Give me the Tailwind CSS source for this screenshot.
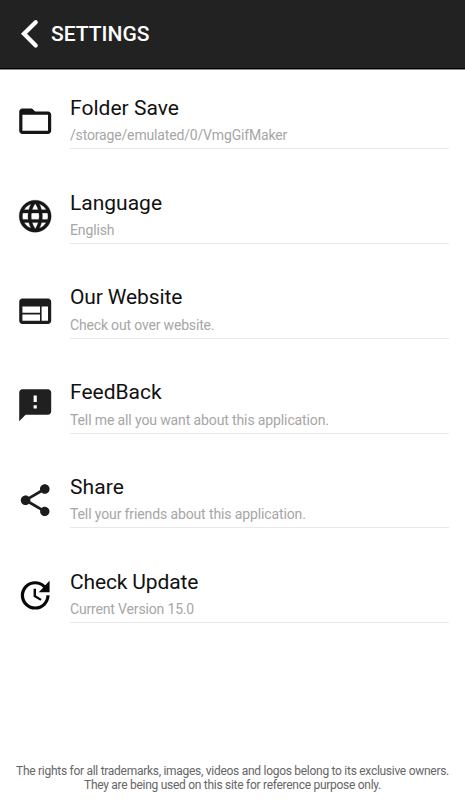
<!DOCTYPE html>
<html lang="en">
<head>
<meta charset="utf-8">
<title>Settings</title>
<script src="https://cdn.jsdelivr.net/npm/@tailwindcss/browser@4"></script>
</head>
<body class="bg-white font-['Roboto',sans-serif]">
<div class="flex h-[800px] w-[465px] flex-col overflow-hidden bg-white">
  <header class="flex h-[70px] shrink-0 items-center border-b border-[#8a8a8a] bg-[#222222] pb-[2px] pl-5 shadow-[inset_0_-1px_0_#000]">
    <svg class="h-8 w-[20px] shrink-0" viewBox="0 0 20 32" fill="none" stroke="#fff" stroke-width="4.3" stroke-linecap="round" stroke-linejoin="miter"><path d="M15.7 4.2 4 15.7 15.7 27.4"/></svg>
    <h1 class="pl-[11px] text-[21px] font-medium leading-7 text-white">SETTINGS</h1>
  </header>
  <main class="flex flex-col pt-[24px]">
    <section class="flex h-[94.85px] pl-[15.8px] pr-4">
      <svg class="mt-[8px] size-[38.4px] shrink-0 text-[#161616]" viewBox="0 0 24 24" fill="currentColor"><path d="M20 6h-8l-2-2H4c-1.1 0-1.99.9-1.99 2L2 18c0 1.1.9 2 2 2h16c1.1 0 2-.9 2-2V8c0-1.1-.9-2-2-2zm0 12H4V8h16v10z"/></svg>
      <div class="ml-[15.8px] h-[55px] flex-1 border-b border-[#e9e9e9]"><h2 class="text-[21px] leading-7 tracking-[0.03px] text-[#111]">Folder Save</h2><p class="text-[14px] leading-[26px] tracking-[-0.16px] text-[#a6a6a6]">/storage/emulated/0/VmgGifMaker</p></div>
    </section>
    <section class="flex h-[94.85px] pl-[15.8px] pr-4">
      <svg class="mt-[8px] size-[38.4px] shrink-0 text-[#161616]" viewBox="0 0 24 24" fill="currentColor"><path d="M11.99 2C6.47 2 2 6.48 2 12s4.47 10 9.99 10C17.52 22 22 17.52 22 12S17.52 2 11.99 2zm6.93 6h-2.95c-.32-1.25-.78-2.45-1.38-3.56 1.84.63 3.37 1.91 4.33 3.56zM12 4.04c.83 1.2 1.48 2.53 1.91 3.96h-3.82c.43-1.43 1.08-2.76 1.91-3.96zM4.26 14C4.1 13.36 4 12.69 4 12s.1-1.36.26-2h3.38c-.08.66-.14 1.32-.14 2s.06 1.34.14 2H4.26zm.82 2h2.95c.32 1.25.78 2.45 1.38 3.56-1.84-.63-3.37-1.9-4.33-3.56zm2.95-8H5.08c.96-1.66 2.49-2.93 4.33-3.56C8.81 5.55 8.35 6.75 8.03 8zM12 19.96c-.83-1.2-1.48-2.53-1.91-3.96h3.82c-.43 1.43-1.08 2.76-1.91 3.96zM14.34 14H9.66c-.09-.66-.16-1.32-.16-2s.07-1.35.16-2h4.68c.09.65.16 1.32.16 2s-.07 1.34-.16 2zm.25 5.56c.6-1.11 1.06-2.31 1.38-3.56h2.95c-.96 1.65-2.49 2.93-4.33 3.56zM16.36 14c.08-.66.14-1.32.14-2s-.06-1.34-.14-2h3.38c.16.64.26 1.31.26 2s-.1 1.36-.26 2h-3.38z" stroke="currentColor" stroke-width=".2"/></svg>
      <div class="ml-[15.8px] h-[55px] flex-1 border-b border-[#e9e9e9]"><h2 class="text-[21px] leading-7 text-[#111]">Language</h2><p class="text-[14px] leading-[26px] tracking-[-0.12px] text-[#a6a6a6]">English</p></div>
    </section>
    <section class="flex h-[94.85px] pl-[15.8px] pr-4">
      <svg class="mt-[8px] size-[38.4px] shrink-0 text-[#1c1c1c]" viewBox="0 0 24 24" fill="currentColor"><path d="M20 4H4c-1.1 0-1.99.9-1.99 2L2 18c0 1.1.9 2 2 2h16c1.1 0 2-.9 2-2V6c0-1.1-.9-2-2-2zm-5 14H4v-4h11v4zm0-5H4V9h11v4zm5 5h-4V9h4v9z"/></svg>
      <div class="ml-[15.8px] h-[55px] flex-1 border-b border-[#e9e9e9]"><h2 class="-mt-[0.6px] mb-[0.6px] text-[21px] leading-7 tracking-[-0.12px] text-[#111]">Our Website</h2><p class="text-[14px] leading-[26px] tracking-[-0.17px] text-[#a6a6a6]">Check out over website.</p></div>
    </section>
    <section class="flex h-[94.85px] pl-[15.8px] pr-4">
      <svg class="mt-[7.4px] size-[38.4px] shrink-0 text-[#202020]" viewBox="0 0 24 24" fill="currentColor"><path d="M20 2H4c-1.1 0-1.99.9-1.99 2L2 22l4-4h14c1.1 0 2-.9 2-2V4c0-1.1-.9-2-2-2zm-7 12h-2v-2h2v2zm0-4h-2V6h2v4z"/></svg>
      <div class="ml-[15.8px] h-[55px] flex-1 border-b border-[#e9e9e9]"><h2 class="-mt-[0.6px] mb-[0.6px] text-[21px] leading-7 text-[#111]">FeedBack</h2><p class="text-[14px] leading-[26px] tracking-[-0.12px] text-[#a6a6a6]">Tell me all you want about this application.</p></div>
    </section>
    <section class="flex h-[94.85px] pl-[15.8px] pr-4">
      <svg class="mt-[8px] size-[38.4px] shrink-0 text-[#1c1c1c]" viewBox="0 0 24 24" fill="currentColor"><path d="M18 16.08c-.76 0-1.44.3-1.96.77L8.91 12.7c.05-.23.09-.46.09-.7s-.04-.47-.09-.7l7.05-4.11c.54.5 1.25.81 2.04.81 1.66 0 3-1.34 3-3s-1.34-3-3-3-3 1.34-3 3c0 .24.04.47.09.7L8.04 9.81C7.5 9.31 6.79 9 6 9c-1.66 0-3 1.34-3 3s1.34 3 3 3c.79 0 1.5-.31 2.04-.81l7.12 4.16c-.05.21-.08.43-.08.65 0 1.61 1.31 2.92 2.92 2.92s2.92-1.31 2.92-2.92-1.31-2.92-2.92-2.92z"/></svg>
      <div class="ml-[15.8px] h-[55px] flex-1 border-b border-[#e9e9e9]"><h2 class="text-[21px] leading-7 tracking-[0.1px] text-[#111]">Share</h2><p class="text-[14px] leading-[26px] tracking-[-0.12px] text-[#a6a6a6]">Tell your friends about this application.</p></div>
    </section>
    <section class="flex h-[94.85px] pl-[15.8px] pr-4">
      <svg class="mt-[8px] size-[38.4px] shrink-0 text-[#080808]" viewBox="0 0 24 24" fill="currentColor"><path d="M21 10.12h-6.78l2.74-2.82c-2.73-2.7-7.15-2.8-9.88-.1-2.73 2.71-2.73 7.08 0 9.79s7.15 2.71 9.88 0C18.32 15.65 19 14.08 19 12.1h2c0 1.98-.88 4.55-2.64 6.29-3.51 3.48-9.21 3.48-12.72 0-3.5-3.47-3.53-9.11-.02-12.58s9.14-3.47 12.65 0L21 3v7.12zM12.5 8v4.25l3.5 2.08-.72 1.21L11 13V8h1.5z"/></svg>
      <div class="ml-[15.8px] h-[55px] flex-1 border-b border-[#e9e9e9]"><h2 class="text-[21px] leading-7 tracking-[-0.14px] text-[#111]">Check Update</h2><p class="text-[14px] leading-[26px] tracking-[-0.16px] text-[#a6a6a6]">Current Version 15.0</p></div>
    </section>
  </main>
  <footer class="mt-auto whitespace-nowrap pb-[8px] text-center text-[12px] leading-[14px] tracking-[-0.28px] text-[#666]">
    <p>The rights for all trademarks, images, videos and logos belong to its exclusive owners.</p>
    <p>They are being used on this site for reference purpose only.</p>
  </footer>
</div>
</body>
</html>
